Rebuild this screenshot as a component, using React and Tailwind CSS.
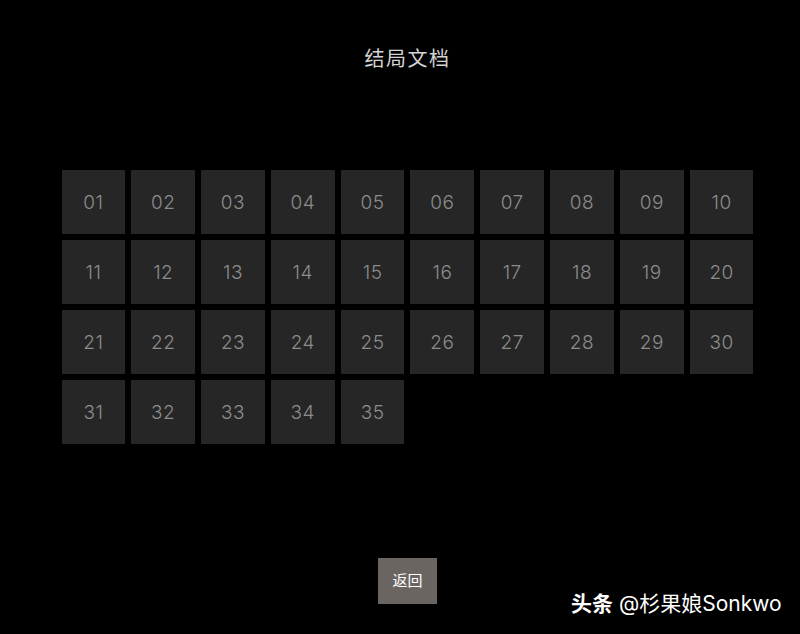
import React from "react";

const nums = Array.from({ length: 35 }, (_, i) => String(i + 1).padStart(2, "0"));

export default function App() {
  return (
    <div
      className="relative w-[800px] h-[634px] bg-black overflow-hidden"
      style={{ fontFamily: 'Inter, "Noto Sans CJK SC", sans-serif' }}
    >
      <div className="flex flex-col items-center pl-[15px] h-full">
        <h1 className="mt-[45px] text-[20px] leading-[28px] text-[#d4d4d4] tracking-[1.5px]">结局文档</h1>
        <div className="mt-[97px] w-[692px] grid grid-cols-10 gap-x-[6px] gap-y-[6px]">
          {nums.map((n) => (
            <div
              key={n}
              className="h-[64px] pt-[2px] bg-[#262626] flex items-center justify-center text-[19px] font-light tracking-[0.5px] text-[#8c8c8c]"
            >
              {n}
            </div>
          ))}
        </div>
        <button className="mt-[114px] w-[59px] h-[46px] bg-[#6b6562] text-white text-[15px] flex items-center justify-center">
          返回
        </button>
      </div>
      <div className="absolute left-[571px] top-[590px] text-white text-[21px] leading-[28px] whitespace-nowrap">
        <span className="font-bold">头条</span> @杉果娘Sonkwo
      </div>
    </div>
  );
}
